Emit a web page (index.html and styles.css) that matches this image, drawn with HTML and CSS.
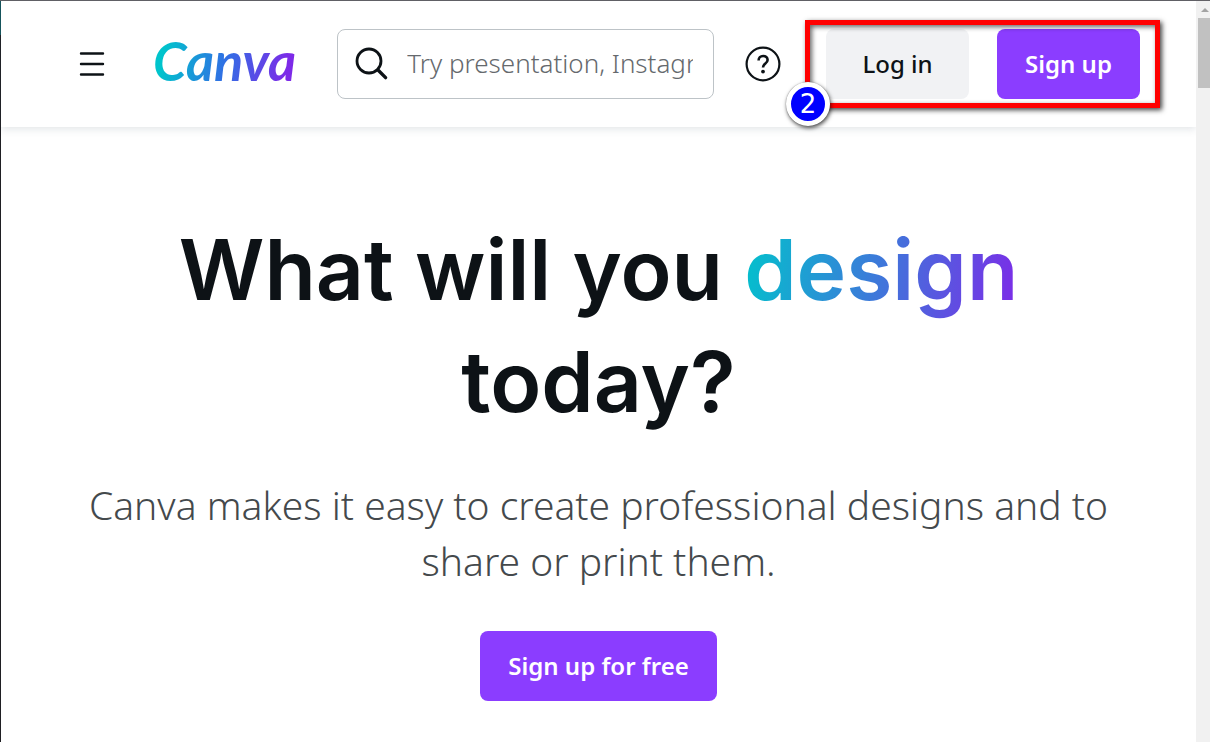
FILE: index.html
```html
<!DOCTYPE html>
<html lang="en">
<head>
<meta charset="utf-8">
<meta name="viewport" content="width=device-width, initial-scale=1">
<title>Canva</title>
<link rel="stylesheet" href="styles.css">
</head>
<body>
<div class="window">
  <div class="page">
    <header class="header">
      <button class="icon-button" type="button" aria-label="Menu">
        <svg width="26" height="26" viewBox="0 0 26 26" fill="none" stroke="#0d1216" stroke-width="2.4" stroke-linecap="round"><path d="M2 2.5h22M2 13h22M2 23.5h22"/></svg>
      </button>
      <a class="logo" href="#">Canva</a>
      <label class="search">
        <svg class="search-icon" width="34" height="34" viewBox="0 0 34 34" fill="none" stroke="#0d1216" stroke-width="2.8" stroke-linecap="round"><circle cx="14" cy="14" r="12"/><path d="M23 23l7.6 7.6" stroke-width="3.4"/></svg>
        <input class="search-input" type="text" aria-label="Search" placeholder="Try presentation, Instagram post">
      </label>
      <button class="icon-button" type="button" aria-label="Help">
        <svg width="36" height="36" viewBox="0 0 36 36" fill="none" stroke="#0d1216"><circle cx="18" cy="18" r="16.4" stroke-width="2.2"/><path d="M13.6 14.6c0-2.8 1.9-4.6 4.5-4.6s4.5 1.6 4.5 4c0 3.6-4.6 3.4-4.6 7.4" stroke-width="2.6"/><circle cx="18" cy="25.6" r="1.9" fill="#0d1216" stroke="none"/></svg>
      </button>
      <div class="auth">
        <button class="button button-light" type="button">Log in</button>
        <button class="button button-primary" type="button">Sign up</button>
        <div class="callout"><span class="callout-badge">2</span></div>
      </div>
    </header>
    <main class="hero">
      <h1 class="hero-title">What will you <span class="gradient-word">design</span> today?</h1>
      <p class="hero-text">Canva makes it easy to create professional designs and to share or print them.</p>
      <button class="button button-primary" type="button">Sign up for free</button>
    </main>
  </div>
  <div class="scrollbar">
    <svg class="scroll-arrow" width="8" height="4" viewBox="0 0 8 4"><path d="M0 4l4-4 4 4z" fill="#a3a3a3"/></svg>
    <div class="scroll-thumb"></div>
  </div>
</div>
</body>
</html>
```
FILE: styles.css
```css
* {
  box-sizing: border-box;
}

body {
  margin: 0;
  background: #fff;
  color: #0d1216;
  font-family: "Noto Sans", "Open Sans", sans-serif;
}

.window {
  display: flex;
  min-height: 100vh;
  border-top: 1px solid #626166;
  background: linear-gradient(#14545c 34px, #1f1f23 34px);
  padding-left: 1px;
}

.page {
  flex: 1;
  min-width: 0;
  background: #fff;
}

.header {
  display: flex;
  align-items: center;
  padding: 28px 56px 28px 78px;
  box-shadow: 0 2px 8px rgba(57, 76, 96, 0.15);
}

.icon-button {
  display: flex;
  flex: none;
  padding: 0;
  border: 0;
  background: none;
}

.logo {
  flex: none;
  margin-left: 46px;
  padding: 0 2px 6px;
  background: linear-gradient(100deg, #00c4cc 10%, #3070e4 50%, #7d2ae8 90%);
  background-clip: text;
  -webkit-background-clip: text;
  color: transparent;
  font: italic 700 54px/64px Lato, sans-serif;
  text-decoration: none;
}

.search {
  display: flex;
  flex: 1;
  align-items: center;
  min-width: 0;
  height: 70px;
  margin: 0 31px 0 39px;
  padding: 0 20px 0 17px;
  border: 1px solid #bdc3c7;
  border-radius: 8px;
}

.search-icon {
  flex: none;
}

.search-input {
  flex: 1;
  min-width: 0;
  margin-left: 18px;
  padding: 0 0 2px;
  border: 0;
  outline: 0;
  background: none;
  font: 300 26px/36px "Noto Sans", sans-serif;
}

.search-input::placeholder {
  color: #65696d;
}

.auth {
  position: relative;
  display: flex;
  flex: none;
  gap: 28px;
  margin-left: 45px;
}

.button {
  min-width: 143px;
  height: 70px;
  padding: 0 28px;
  border: 0;
  border-radius: 8px;
  font: 500 24px/36px "Noto Sans", sans-serif;
  white-space: nowrap;
}

.button-light {
  background: #f1f2f4;
  color: #0d1216;
}

.button-primary {
  background: #8b3dff;
  color: #fff;
  font-weight: 600;
}

.callout {
  position: absolute;
  inset: -9px -20px -9px -21px;
  border: 5px solid #f00;
  box-shadow: 2px 2px 5px rgba(0, 0, 0, 0.75), inset 2px 2px 5px rgba(0, 0, 0, 0.6);
  pointer-events: none;
}

.callout-badge {
  position: absolute;
  left: -24px;
  bottom: -23px;
  width: 44px;
  height: 44px;
  border: 5px solid #fff;
  border-radius: 50%;
  background: #00f;
  box-shadow: 1px 2px 4px rgba(0, 0, 0, 0.7), 0 0 1px #777;
  color: #fff;
  font: 26px/34px "DejaVu Sans", sans-serif;
  text-align: center;
}

.hero {
  display: flex;
  flex-direction: column;
  align-items: center;
  padding: 87px 80px 40px;
  text-align: center;
}

.hero-title {
  max-width: 900px;
  margin: 0;
  font: 600 84px/112px Inter, sans-serif;
}

.gradient-word {
  background: linear-gradient(100deg, #00c4cc, #7d2ae8);
  background-clip: text;
  -webkit-background-clip: text;
  color: transparent;
}

.hero-text {
  max-width: 1034px;
  margin: 39px 0 42px;
  color: #44494c;
  font: 300 39px/56px "Noto Sans", sans-serif;
}

.scrollbar {
  display: flex;
  flex: none;
  flex-direction: column;
  width: 14px;
  padding: 7px 0 0 2px;
  background: #f1f1f1;
}

.scroll-arrow {
  margin-left: 3px;
}

.scroll-thumb {
  height: 70px;
  margin-top: 6px;
  background: #c1c1c1;
}
```
